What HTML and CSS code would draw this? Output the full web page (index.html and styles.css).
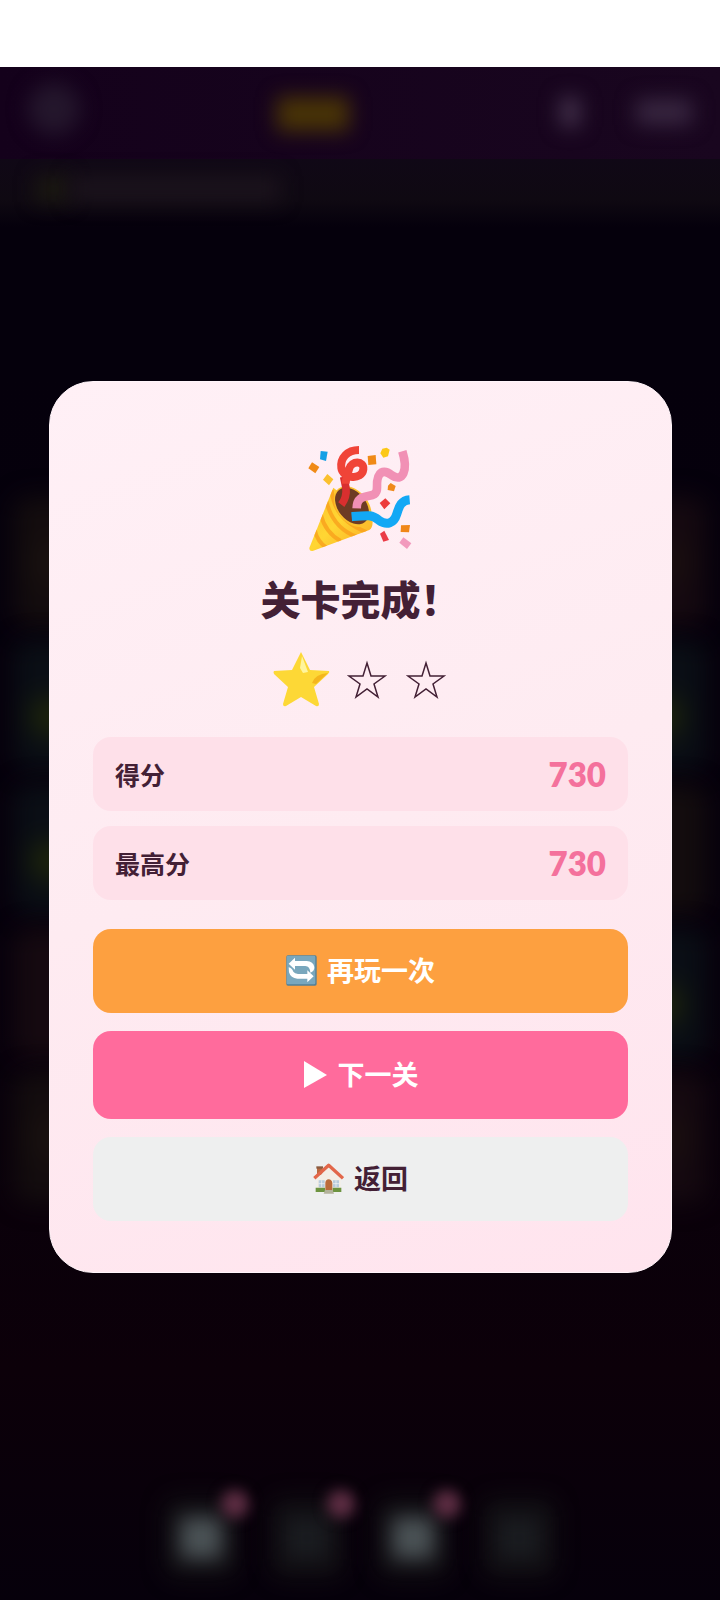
FILE: index.html
```html
<!DOCTYPE html>
<html lang="zh-CN">
<head>
<meta charset="utf-8">
<meta name="viewport" content="width=device-width, initial-scale=1">
<title>关卡完成</title>
<link rel="stylesheet" href="styles.css">
</head>
<body>
<div class="status-bar"></div>
<div class="stage">
  <div class="game" aria-hidden="true">
    <div class="hud">
      <span class="blob hud-back"></span>
      <span class="blob hud-score"></span>
      <span class="hud-stats"><span class="blob hud-moves"></span><span class="blob hud-goal"></span></span>
    </div>
    <div class="hint"><span class="blob hint-star"></span><span class="blob hint-text"></span></div>
    <div class="board">
      <span class="tile brown"></span><span class="tile plum"></span>
      <span class="tile teal"></span><span class="tile teal"></span>
      <span class="tile teal"></span><span class="tile brown"></span>
      <span class="tile plum"></span><span class="tile teal"></span>
      <span class="tile brown"></span><span class="tile plum"></span>
    </div>
    <div class="tools">
      <span class="tool"><i class="tool-icon"></i><i class="tool-badge"></i></span>
      <span class="tool"><i class="tool-icon dim"></i><i class="tool-badge"></i></span>
      <span class="tool"><i class="tool-icon"></i><i class="tool-badge"></i></span>
      <span class="tool"><i class="tool-icon dim"></i></span>
    </div>
  </div>

  <main class="overlay">
    <section class="card" role="dialog" aria-labelledby="title">
      <svg class="popper" viewBox="84 42 324 324" aria-hidden="true">
        <defs>
          <linearGradient id="cone" x1="0" y1="0" x2="1" y2="1"><stop offset="0" stop-color="#fbc02d"/><stop offset=".5" stop-color="#ffd633"/><stop offset="1" stop-color="#f9a825"/></linearGradient>
          <clipPath id="cone-clip"><path d="M163 173 91 354q0 11 12 8l168-62q14-9 8-38z"/></clipPath>
        </defs>
        <path d="M163 173 91 354q0 11 12 8l168-62q14-9 8-38z" fill="url(#cone)"/>
        <g clip-path="url(#cone-clip)" fill="none" stroke="#f9a01b" stroke-width="12" opacity=".8">
          <path d="M142 214q20 80 90 106M125 253q14 55 60 80M107 300q8 35 36 54M158 180q8 90 104 126"/>
        </g>
        <ellipse cx="221" cy="230" rx="47" ry="69" transform="rotate(-39 221 230)" fill="#fbc02d"/>
        <ellipse cx="219" cy="228" rx="42" ry="62" transform="rotate(-39 219 228)" fill="#6d3b24"/>
        <path d="M187 224q17-22 14-50l-7-34" fill="none" stroke="#d92f2f" stroke-width="23"/>
        <path d="M240 60c-35 0-57 24-53 54 4 32 62 38 66 4 3-27-36-27-43 0-5 18-10 29-10 43" fill="none" stroke="#f04438" stroke-width="24"/>
        <path d="M233 235c1-58 62-18 61-62-2-53 22-55 45-37 32 22 49-14 31-72" fill="none" stroke="#f190b5" stroke-width="26"/>
        <path d="M218 260c53-5 61-6 82 11 24 17 45 8 53-18 8-26 14-42 39-44" fill="none" stroke="#13a8f5" stroke-width="27"/>
        <path d="m125 63 21 2-5 28-18-5z" fill="#139fe5"/>
        <path d="m99 97 22 14-12 19-21-15z" fill="#f08a16"/>
        <path d="m145 132 18 16-13 18-18-17z" fill="#fbc02d"/>
        <path d="m266 78 24-3 2 28-24 2z" fill="#f08a16"/>
        <path d="m310 56 13-3 9 6-5 20-14 4-9-13z" fill="#fcc817"/>
        <path d="m335 159 15 9-5 16-19-4 1-13z" fill="#ef8a1b"/>
        <path d="m319 205 15 15-18 18-14-19z" fill="#ed3b3b"/>
        <path d="m366 286 27-1-3 22-25-1z" fill="#f08718"/>
        <path d="m316 302 14 28-17 5-10-24z" fill="#ea3b46"/>
        <path d="m373 322 24 18-13 17-23-19z" fill="#f29abd"/>
      </svg>
      <h1 class="title" id="title">关卡完成！</h1>
      <div class="stars" role="img" aria-label="获得一颗星">
        <svg class="star-won" viewBox="0 0 62 58">
          <path d="m30 2 9 18 19 1q1 1-1 3L43 37l5 17q0 3-3 2L30 47 15 56q-3 1-3-2l5-17L3 24q-1-2 0-3l18-1z" fill="#fdd836"/>
          <path d="m31 6 6 16-5 1-3-5z" fill="#fff59d"/>
          <path d="M41 33q3-9 16-10L45 34z" fill="#f4b61d"/>
        </svg>
        <svg class="star-empty" viewBox="0 0 48 58"><path d="m23 13 4 13h14l-11 8 4 13-11-8-11 8 4-13-11-8h14z"/></svg>
        <svg class="star-empty" viewBox="0 0 48 58"><path d="m23 13 4 13h14l-11 8 4 13-11-8-11 8 4-13-11-8h14z"/></svg>
      </div>
      <dl class="scores">
        <div class="score-row"><dt>得分</dt><dd>730</dd></div>
        <div class="score-row"><dt>最高分</dt><dd>730</dd></div>
      </dl>
      <div class="actions">
        <button class="btn btn-replay" type="button">
          <svg width="31" height="31" viewBox="0 0 93 93" aria-hidden="true">
            <rect x="1" y="1" width="91" height="91" rx="5" fill="#527f96"/>
            <rect x="2" y="2" width="86" height="86" rx="4" fill="#79a7bd"/>
            <path d="M27 8 8 26l19 18V33h31q14 1 15 20 13-5 12-17-3-17-23-18H27zM64 46l19 18-19 18V71H34Q14 70 9 52l-1-15q10 2 14 13 4 6 14 7h28z" fill="#fff"/>
          </svg>再玩一次
        </button>
        <button class="btn btn-next" type="button">
          <svg width="25" height="29" viewBox="0 0 25 29" aria-hidden="true"><path d="M1 1v27l23-13z" fill="#fff"/></svg>下一关
        </button>
        <button class="btn btn-home" type="button">
          <svg width="31" height="31" viewBox="0 0 93 93" aria-hidden="true">
            <path d="M12 12h16v24H12z" fill="#b8683e"/><path d="M10 10h20v7H10z" fill="#8b5b40"/>
            <path d="M12 46 47 14l36 32v38H12z" fill="#f3eee6"/>
            <path d="M17 52h18v21H17zM60 52h18v21H60z" fill="#b7cbdc"/><path d="M26 52v21M69 52v21M17 62h18M60 62h18" stroke="#f8f8f8" stroke-width="2"/>
            <path d="M37 83V60q1-11 10-11t11 11v23z" fill="#bb6b3b"/>
            <path d="M8 74h28v13H8zM59 74h26v13H59z" fill="#6d9440"/><path d="M36 81h23l4 11H32z" fill="#b3b29b"/>
            <path d="M4 46 47 7l43 39" fill="none" stroke="#e2674a" stroke-width="10" stroke-linejoin="round"/>
          </svg>返回
        </button>
      </div>
    </section>
  </main>
</div>
</body>
</html>
```
FILE: styles.css
```css
* { box-sizing: border-box; }

body {
  margin: 0;
  min-height: 100vh;
  display: flex;
  flex-direction: column;
  background: #fff;
  color: #432035;
  font-family: Lato, "Noto Sans CJK SC", sans-serif;
}

.status-bar { height: 67px; }

.stage {
  position: relative;
  flex: 1;
  display: flex;
  overflow: hidden;
  background: linear-gradient(#05000c 20%, #07010c 60%, #0c0009 85%, #06000b);
}

/* Dimmed game screen behind the dialog */
.game {
  position: absolute;
  inset: 0;
  display: flex;
  flex-direction: column;
}

.blob { display: block; filter: blur(10px); }

.hud {
  height: 92px;
  padding: 0 28px 8px;
  display: grid;
  grid-template-columns: 1fr auto 1fr;
  align-items: center;
  background: linear-gradient(90deg, #14011b, #19061f);
  box-shadow: 0 0 12px #15021d;
}
.hud-back { width: 52px; height: 52px; border-radius: 50%; background: #24162c; }
.hud-score { width: 72px; height: 34px; margin: 10px 94px 0 0; background: #493406; }
.hud-stats { display: flex; justify-content: flex-end; align-items: center; gap: 56px; padding-top: 6px; }
.hud-moves { width: 20px; height: 30px; background: #42304a; }
.hud-goal { width: 56px; height: 26px; background: #382640; }

.hint {
  height: 68px;
  padding: 0 36px 8px;
  display: flex;
  align-items: center;
  background: linear-gradient(#100816, #0f0912 60%, #05000c);
}
.hint-star { width: 34px; height: 26px; background: #1b1911; }
.hint-text { width: 210px; height: 26px; background: #1b131c; }

.board {
  margin-top: 270px;
  padding: 0 14px;
  display: grid;
  grid-template-columns: 130px 130px;
  justify-content: space-between;
  gap: 14px;
}
.tile { height: 130px; border-radius: 16px; filter: blur(12px); }
.brown { background: radial-gradient(circle at 30% 50%, #1c1410, #130c0e 28%); }
.plum { background: radial-gradient(circle at 70% 50%, #1c120f, #150910 28%); }
.teal { background: radial-gradient(circle at 28% 58%, #273005, #0a0e15 24%); }
.teal:nth-child(even) { background: radial-gradient(circle at 66% 58%, #273005, #0a0e15 26%); }

.tools {
  margin-top: auto;
  padding-bottom: 16px;
  display: flex;
  justify-content: center;
  gap: 22px;
}
.tool {
  position: relative;
  width: 84px;
  height: 92px;
  display: flex;
  justify-content: center;
  align-items: center;
}
.tool::before {
  content: "";
  position: absolute;
  inset: 4px;
  border-radius: 16px;
  background: #100d12;
  filter: blur(10px);
}
.tool-icon { width: 42px; height: 42px; background: #4b5356; filter: blur(10px); }
.tool-icon.dim { background: #1a1c20; }
.tool-badge {
  position: absolute;
  top: -2px;
  right: -6px;
  width: 28px;
  height: 28px;
  border-radius: 50%;
  background: #5d2d43;
  filter: blur(7px);
}

.overlay {
  position: relative;
  flex: 1;
  display: flex;
  align-items: center;
  padding: 0 48px 14px 49px;
}

.card {
  flex: 1;
  display: flex;
  flex-direction: column;
  align-items: center;
  padding: 62px 43px 51px;
  border: 1px solid #fff5fa;
  border-radius: 44px;
  background: linear-gradient(160deg, #fff0f6, #feebf1 50%, #ffe4ee);
}

.popper { width: 108px; height: 108px; }

.title {
  margin: 20px 0 0;
  font-size: 40px;
  line-height: 56px;
  font-weight: 800;
}

.stars { display: flex; gap: 11px; margin-top: 22px; }
.star-won { width: 62px; height: 58px; }
.star-empty { width: 48px; height: 58px; fill: none; stroke: #432035; stroke-width: 1.5; }

.scores {
  align-self: stretch;
  margin: 29px 0 0;
  display: grid;
  gap: 15px;
}
.score-row {
  min-height: 74px;
  padding: 0 22px;
  display: flex;
  justify-content: space-between;
  align-items: center;
  border-radius: 18px;
  background: #fee0e9;
}
dt { font-size: 25px; font-weight: 700; }
dd { margin: 0; font-size: 33px; font-weight: 800; color: #f4719c; }

.actions {
  align-self: stretch;
  margin-top: 29px;
  display: grid;
  gap: 18px;
}
.btn {
  min-height: 84px;
  display: flex;
  justify-content: center;
  align-items: center;
  gap: 10px;
  border: 0;
  border-radius: 18px;
  color: #fff;
  font: 700 27px/40px Lato, "Noto Sans CJK SC", sans-serif;
  cursor: pointer;
}
.btn-replay { background: #fda040; }
.btn-next { min-height: 88px; background: #ff6b9c; }
.btn-home { background: #eeefef; color: #432035; }
```
